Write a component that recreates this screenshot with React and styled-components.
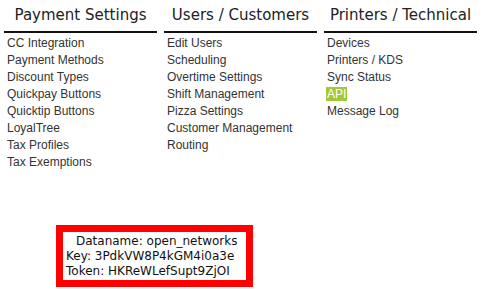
import React from "react";
import styled, { createGlobalStyle } from "styled-components";

const Global = createGlobalStyle`
  html, body { margin: 0; padding: 0; background: #fff; }
  body { font-family: "Liberation Sans", Arial, sans-serif; }
`;

const Page = styled.div`
  padding: 6px 0 0 4px;
`;

const Columns = styled.div`
  display: grid;
  grid-template-columns: repeat(3, 153px);
  column-gap: 7px;
  align-items: start;
`;

const Column = styled.section`
  display: flex;
  flex-direction: column;
`;

const Heading = styled.h2`
  margin: 0;
  padding-bottom: 7px;
  border-bottom: 2px solid #111;
  font-family: "DejaVu Sans", Verdana, sans-serif;
  font-weight: normal;
  font-size: 15px;
  line-height: 18px;
  color: #222;
  text-align: center;
  white-space: nowrap;
`;

const List = styled.ul`
  list-style: none;
  margin: 2px 0 0;
  padding: 0 0 0 3px;
`;

const Item = styled.li`
  font-size: 12px;
  line-height: 17px;
  color: #333;
  white-space: nowrap;
`;

const Label = styled.span`
  padding: 0 1px;
  margin-left: -1px;
  background: ${(p) => (p.$active ? "#9fc83a" : "transparent")};
  color: ${(p) => (p.$active ? "#fff" : "inherit")};
`;

const InfoBox = styled.div`
  margin: 54px 0 0 52px;
  width: 180px;
  border: 7px solid #f00;
  padding: 2px 0 1px 3px;
  font-family: "DejaVu Sans", Verdana, sans-serif;
  font-size: 12px;
  line-height: 15px;
  color: #111;
`;

const InfoLine = styled.div`
  white-space: nowrap;
  text-indent: ${(p) => (p.$indent ? "10px" : "0")};
`;

const columns = [
  {
    title: "Payment Settings",
    items: [
      "CC Integration",
      "Payment Methods",
      "Discount Types",
      "Quickpay Buttons",
      "Quicktip Buttons",
      "LoyalTree",
      "Tax Profiles",
      "Tax Exemptions",
    ],
  },
  {
    title: "Users / Customers",
    items: [
      "Edit Users",
      "Scheduling",
      "Overtime Settings",
      "Shift Management",
      "Pizza Settings",
      "Customer Management",
      "Routing",
    ],
  },
  {
    title: "Printers / Technical",
    items: ["Devices", "Printers / KDS", "Sync Status", "API", "Message Log"],
    active: "API",
  },
];

export default function App() {
  return (
    <>
      <Global />
      <Page>
        <Columns>
          {columns.map((c) => (
            <Column key={c.title}>
              <Heading>{c.title}</Heading>
              <List>
                {c.items.map((it) => (
                  <Item key={it}>
                    <Label $active={c.active === it}>{it}</Label>
                  </Item>
                ))}
              </List>
            </Column>
          ))}
        </Columns>
        <InfoBox>
          <InfoLine $indent>Dataname: open_networks</InfoLine>
          <InfoLine>Key: 3PdkVW8P4kGM4i0a3e</InfoLine>
          <InfoLine>Token: HKReWLefSupt9ZjOI</InfoLine>
        </InfoBox>
      </Page>
    </>
  );
}
